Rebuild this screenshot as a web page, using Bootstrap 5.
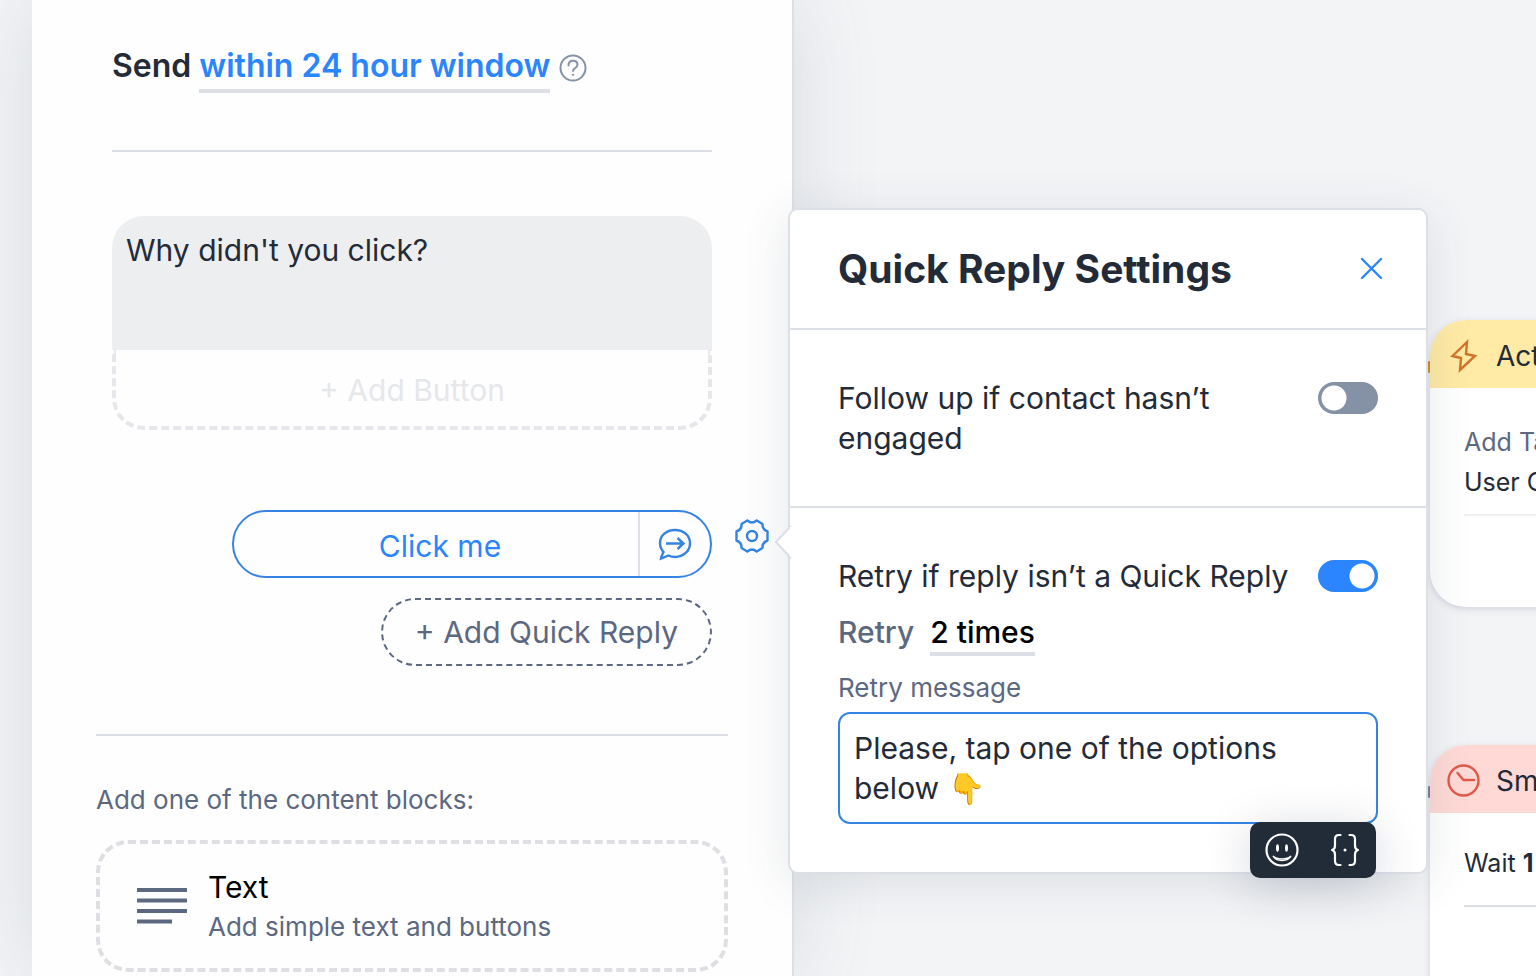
<!DOCTYPE html>
<html lang="en">
<head>
<meta charset="utf-8">
<meta name="viewport" content="width=device-width, initial-scale=1">
<title>Flow editor</title>
<link href="https://cdn.jsdelivr.net/npm/bootstrap@5.3.0/dist/css/bootstrap.min.css" rel="stylesheet">
<style>
  :root {
    --ink: #232b38;
    --slate: #5c6880;
    --line: #dcdfe6;
    --blue: #2a85ff;
    --stroke-blue: #3584e4;
  }
  body {
    font-family: Inter, "Liberation Sans", sans-serif;
    font-size: 30px;
    line-height: 40px;
    color: var(--ink);
    background: #f3f4f6;
  }
  svg { display: block; flex: none; }
  button, select { border: 0; padding: 0; background: none; color: inherit; font: inherit; }
  .editor { display: grid; grid-template-columns: 794fr 742fr; min-height: 100vh; overflow: hidden; }
  .side { position: relative; z-index: 2; padding-left: 32px; }
  .side-sheet {
    min-height: 100vh;
    background: #fefefe;
    border-right: 2px solid var(--line);
    box-shadow: 0 0 80px rgba(80, 100, 120, .16);
  }
  .block-main { padding: 46px 80px 0; }
  .send-row { font-size: 32px; font-weight: 600; gap: 8px; }
  .underlined { border-bottom: 4px solid var(--line); }
  .send-row .underlined { color: var(--blue); padding-bottom: 3px; font-weight: 600; }
  .rule { height: 2px; background: var(--line); }
  .msg { height: 134px; padding: 14px; border: 0; border-radius: 32px 32px 0 0; background: #edeef0; color: var(--ink); resize: none; display: block; width: 100%; outline: 0; }
  .add-btn { width: 100%; height: 80px; padding-top: 4px; border: 4px dashed #e6e7eb; border-top: 0; border-radius: 0 0 32px 32px; color: #e6e7eb; }
  .replies { display: grid; grid-template-columns: 1fr 34px; column-gap: 23px; padding: 80px 23px 0 80px; }
  .reply-stack { display: flex; flex-direction: column; align-items: flex-end; gap: 20px; }
  .reply { display: flex; width: 80%; height: 68px; border: 2px solid var(--stroke-blue); border-radius: 34px; color: var(--blue); }
  .reply-text { flex: 1; padding: 4px 0 0 8px; }
  .reply-go { width: 72px; border-left: 2px solid var(--line); display: flex; align-items: center; justify-content: center; }
  .add-reply { height: 68px; padding: 0 32px; border: 2px dashed var(--slate); border-radius: 34px; color: var(--slate); }
  .gear-slot { position: relative; padding-top: 9px; }
  .blocks { padding: 68px 64px 0; }
  .small-text { font-size: 26px; line-height: 40px; color: var(--slate); }
  .block-card { display: flex; align-items: center; gap: 20px; width: 100%; height: 132px; padding: 2px 36px 0; border: 4px dashed #dedfe3; border-radius: 32px; text-align: left; }

  /* settings popover, hung from the gear */
  .settings {
    position: absolute; left: 53px; top: -302px; width: 640px; height: 666px;
    background: #fff; border: 2px solid var(--line); border-radius: 10px;
    box-shadow: 0 8px 48px rgba(50, 65, 90, .12);
  }
  .settings-arrow { position: absolute; left: -15px; top: 314px; }
  .settings-head { padding: 0 41px 0 48px; height: 118px; }
  .settings h2 { font-size: 39px; line-height: 48px; font-weight: 700; margin: 0; }
  .settings section { border-top: 2px solid var(--line); padding: 48px; }
  .switch-row { display: flex; justify-content: space-between; align-items: flex-start; }
  .form-check-input.toggle {
    flex: none; width: 60px; height: 32px; margin: 4px 0 0; border: 0; border-radius: 16px;
    background: #8592a6 radial-gradient(circle at 16px 16px, #fff 12px, transparent 13px);
  }
  .form-check-input.toggle:checked { background: var(--blue) radial-gradient(circle at 44px 16px, #fff 12px, transparent 13px); }
  .retry-row { display: flex; align-items: flex-start; gap: 16px; margin-top: 16px; font-weight: 500; color: var(--slate); }
  .retry-row select { appearance: none; color: #000; font-weight: 500; height: 44px; border-bottom: 4px solid var(--line); outline: 0; }
  .retry-label { display: block; margin: 12px 0 4px; }
  .retry-box { display: block; width: 100%; height: 112px; border: 2px solid var(--stroke-blue); border-radius: 12px; padding: 14px; color: var(--ink); resize: none; outline: 0; overflow: hidden; }
  .insert-bar { position: absolute; right: 50px; bottom: -6px; width: 126px; height: 56px; padding: 0 15px; border-radius: 10px; background: #222b38; color: #fff; box-shadow: 0 8px 48px rgba(40, 50, 75, .2); }

  /* flow canvas */
  .flow { position: relative; overflow: hidden; }
  .node { position: absolute; left: 636px; width: 440px; border-radius: 36px; background: #fff; box-shadow: 0 2px 6px rgba(80, 95, 130, .22); font-size: 25px; white-space: nowrap; }
  .node-actions { top: 320px; height: 287px; }
  .node-delay { top: 745px; height: 287px; }
  .node-head { display: flex; align-items: center; gap: 16px; height: 68px; padding: 4px 17px 0; border-radius: 36px 36px 0 0; font-size: 28px; }
  .node-actions .node-head { background: #ffeaa6; }
  .node-delay .node-head { background: #ffd9d5; }
  .node-body { padding: 0 34px; }
  .node-body .rule-faint { height: 2px; margin-top: 12px; background: #eff0f3; }
  .port { position: absolute; left: -6px; top: 41px; width: 12px; height: 12px; border-radius: 6px; z-index: -1; }
</style>
</head>
<body>
<div class="editor">
  <aside class="side">
    <div class="side-sheet">
      <div class="block-main">
        <div class="send-row d-flex align-items-start">
          <span>Send</span>
          <button type="button" class="underlined">within 24 hour window</button>
          <svg class="mt-2" width="30" height="30" viewBox="0 0 30 30" fill="none" stroke="#8592a6" stroke-width="2" stroke-linecap="round" role="img" aria-label="Help"><circle cx="15" cy="14" r="12.500"/><path d="M10.500 11.500c0-3 1.900-4.700 4.500-4.700s4.500 1.600 4.500 4c0 3.200-4.500 3.200-4.500 6.200"/><circle cx="15" cy="20.800" r=".7" fill="#8592a6" stroke-width="1"/></svg>
        </div>
        <div class="rule" style="margin:57px 0 64px"></div>
        <textarea class="msg" aria-label="Message">Why didn't you click?</textarea>
        <button type="button" class="add-btn">+ Add Button</button>
      </div>

      <div class="replies">
        <div class="reply-stack">
          <div class="reply">
            <button type="button" class="reply-text">Click me</button>
            <button type="button" class="reply-go" aria-label="Go to reply step">
              <svg width="36" height="36" viewBox="0 0 36 36" fill="none" stroke="#3584e4" stroke-width="2.400"><path d="M6.500 26A13.500 13.500 0 0 1 3 17C3 9.500 9.500 4 18 4s15 5.500 15 13.200S26.500 31 18 31c-2.500 0-4.500-.5-6.500-1.500L4 32.500c.3-2.200 1.200-3.800 2.500-6.500Z"/><path d="M9 17.500h17M20.500 12l6 5.500-6 5.500"/></svg>
            </button>
          </div>
          <button type="button" class="add-reply">+ Add Quick Reply</button>
        </div>
        <div class="gear-slot">
          <button type="button" class="d-block" aria-label="Quick reply settings">
            <svg width="34" height="34" viewBox="0 0 34 34" fill="none" stroke="#3584e4" stroke-width="2.400" stroke-linejoin="round"><path d="M6.500 5 12.300 1.500Q17 5.500 21.700 1.500L27.500 5Q27 10.500 32.500 12.500V21.500Q27 23.500 27.500 29L21.700 32.500Q17 28.500 12.300 32.500L6.500 29Q7 23.500 1.500 21.500V12.500Q7 10.500 6.500 5Z"/><circle cx="17" cy="17" r="5"/></svg>
          </button>
          <div class="settings" role="dialog" aria-labelledby="settings-title">
            <svg class="settings-arrow" width="17" height="36" viewBox="0 0 17 36"><path d="M16 2 1 18l15 16" fill="#fff" stroke="#dcdfe6" stroke-width="2"/><path d="M15 3h2v30h-2z" fill="#fff"/></svg>
            <div class="settings-head d-flex align-items-center justify-content-between">
              <h2 id="settings-title">Quick Reply Settings</h2>
              <button type="button" aria-label="Close"><svg width="28" height="28" viewBox="0 0 28 28" stroke="#2a85ff" stroke-width="2.400" stroke-linecap="round"><path d="m5 4 19 19M24 4 5 23"/></svg></button>
            </div>
            <section>
              <div class="switch-row">
                <label for="follow">Follow up if contact hasn’t engaged</label>
                <input id="follow" class="form-check-input toggle" type="checkbox" role="switch">
              </div>
            </section>
            <section>
              <div class="switch-row">
                <label for="retry">Retry if reply isn’t a Quick Reply</label>
                <input id="retry" class="form-check-input toggle" type="checkbox" role="switch" checked>
              </div>
              <div class="retry-row">
                <label for="times">Retry</label>
                <select id="times"><option>2 times</option></select>
              </div>
              <label for="retry-msg" class="small-text retry-label">Retry message</label>
              <textarea id="retry-msg" class="retry-box">Please, tap one of the options below 👇</textarea>
            </section>
            <div class="insert-bar d-flex align-items-center justify-content-between">
              <button type="button" aria-label="Insert emoji"><svg width="34" height="34" viewBox="0 0 34 34" fill="none" stroke="#fff" stroke-width="2.200" stroke-linecap="round"><circle cx="17" cy="17" r="15.500"/><ellipse cx="12.500" cy="15" rx="1.500" ry="3.800" fill="#fff" stroke="none"/><ellipse cx="21.500" cy="15" rx="1.500" ry="3.800" fill="#fff" stroke="none"/><path d="M8 23c3 6 15 6 18 0-4 3.800-14 3.800-18 0Z" stroke-width="1.400"/></svg></button>
              <button type="button" aria-label="Insert variable"><svg width="32" height="34" viewBox="0 0 32 34" fill="none" stroke="#fff" stroke-width="2.200" stroke-linecap="round" stroke-linejoin="round"><path d="M11.500 2H10C7 2 6 3.500 6 6v6.500C6 15 5 16.500 3 17c2 .5 3 2 3 4.500V28c0 2.500 1 4 4 4h1.500M20.500 2H22c3 0 4 1.500 4 4v6.500c0 2.500 1 4 3 4.500-2 .5-3 2-3 4.500V28c0 2.500-1 4-4 4h-1.500"/><circle cx="16" cy="17" r=".9" fill="#fff" stroke-width="1.200"/></svg></button>
            </div>
          </div>
        </div>
      </div>

      <div class="blocks">
        <div class="rule"></div>
        <p class="small-text mb-0" style="padding:44px 0 20px">Add one of the content blocks:</p>
        <button type="button" class="block-card">
          <svg width="52" height="40" viewBox="0 0 52 40" fill="#5c6880"><path d="M1 1h50v4H1zM1 11.500h50v4H1zM1 22h50v4H1zM1 32.500h35v4H1z"/></svg>
          <span class="d-block"><span class="d-block text-black">Text</span><span class="d-block small-text">Add simple text and buttons</span></span>
        </button>
      </div>
    </div>
  </aside>

  <main class="flow">
    <article class="node node-actions">
      <span class="port" style="background:#d9932e"></span>
      <div class="node-head">
        <svg width="33" height="34" viewBox="0 0 33 34" fill="none" stroke="#d0742a" stroke-width="2.400"><path d="M20 3 5.500 17 14 19l-1 12 15-14-9-2Z"/></svg>
        <span>Actions</span>
      </div>
      <div class="node-body">
        <div style="padding-top:34px;color:#5c6880">Add Tag</div>
        <div>User Clicked</div>
        <div class="rule-faint"></div>
      </div>
    </article>
    <article class="node node-delay">
      <span class="port" style="background:#7b8498"></span>
      <div class="node-head">
        <svg width="33" height="34" viewBox="0 0 33 34" fill="none" stroke="#e05a48" stroke-width="2.400"><circle cx="16.500" cy="16.500" r="15"/><path d="m10.500 9 6 7H27" stroke-linecap="round"/></svg>
        <span>Smart Delay</span>
      </div>
      <div class="node-body">
        <div style="padding:30px 0 22px">Wait <b>1 day</b></div>
        <div class="rule"></div>
      </div>
    </article>
  </main>
</div>
<script src="https://cdn.jsdelivr.net/npm/bootstrap@5.3.0/dist/js/bootstrap.bundle.min.js"></script>
</body>
</html>
